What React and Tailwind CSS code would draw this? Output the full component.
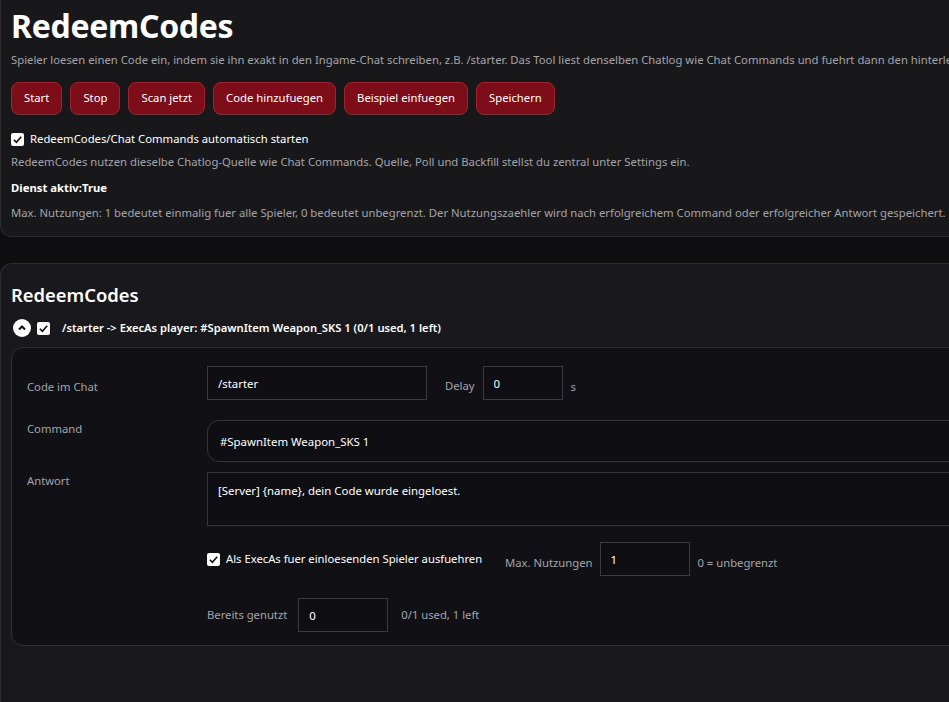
import React, { useState } from "react";

const font = { fontFamily: '"Noto Sans", "Open Sans", sans-serif' };

const Check = ({ checked, onChange }) => (
  <button
    type="button"
    onClick={onChange}
    className="w-[13px] h-[13px] bg-white rounded-[2px] flex items-center justify-center shrink-0"
  >
    {checked && (
      <svg width="11" height="11" viewBox="0 0 12 12">
        <path d="M2 6.3 L4.8 9 L10 3" fill="none" stroke="#111" strokeWidth="1.8" />
      </svg>
    )}
  </button>
);

const buttons = ["Start", "Stop", "Scan jetzt", "Code hinzufuegen", "Beispiel einfuegen", "Speichern"];

const inputCls =
  "h-[34px] bg-[#0f0f13] border border-[#3a3a40] px-[10px] text-white text-[11.4px] outline-none";

const App = () => {
  const [autoStart, setAutoStart] = useState(true);
  const [enabled, setEnabled] = useState(true);
  const [execAs, setExecAs] = useState(true);
  const [open, setOpen] = useState(true);

  const [code, setCode] = useState({
    chat: "/starter",
    delay: "0",
    command: "#SpawnItem Weapon_SKS 1",
    answer: "[Server] {name}, dein Code wurde eingeloest.",
    max: "1",
    used: "0",
  });

  const handleChange = (e) => {
    setCode({ ...code, [e.target.name]: e.target.value });
  };

  return (
    <div style={font} className="w-[949px] h-[702px] overflow-hidden bg-[#0e0e11] text-white">
      <div className="w-[1300px]">
        {/* top card */}
        <div className="bg-[#18181b] border-b border-l border-[#2c2c31] rounded-bl-xl px-[10px] pt-[4px] pb-[15px]">
          <h1 className="text-[32px] font-bold leading-[44px] tracking-[-0.3px]">RedeemCodes</h1>
          <p className="text-[11.3px] leading-[16px] text-[#a3a3aa] mt-[4px] whitespace-nowrap">
            Spieler loesen einen Code ein, indem sie ihn exakt in den Ingame-Chat schreiben, z.B. /starter. Das Tool liest denselben Chatlog wie Chat Commands und fuehrt dann den hinterlegten Command aus.
          </p>
          <div className="flex gap-[8px] mt-[14px]">
            {buttons.map((b) => (
              <button
                key={b}
                className="h-[33px] px-[12px] rounded-lg bg-[#7d0d18] border border-[#a1232e] text-[11.3px] text-white hover:bg-[#8f1420]"
              >
                {b}
              </button>
            ))}
          </div>
          <label className="flex items-center gap-[6px] mt-[16px] text-[11.3px] leading-[16px]">
            <Check checked={autoStart} onChange={() => setAutoStart(!autoStart)} />
            RedeemCodes/Chat Commands automatisch starten
          </label>
          <p className="text-[11.3px] leading-[16px] text-[#a3a3aa] mt-[7px] whitespace-nowrap">
            RedeemCodes nutzen dieselbe Chatlog-Quelle wie Chat Commands. Quelle, Poll und Backfill stellst du zentral unter Settings ein.
          </p>
          <p className="text-[11.3px] leading-[16px] font-bold mt-[10px]">Dienst aktiv:True</p>
          <p className="text-[11.3px] leading-[16px] text-[#a3a3aa] mt-[9px] whitespace-nowrap">
            Max. Nutzungen: 1 bedeutet einmalig fuer alle Spieler, 0 bedeutet unbegrenzt. Der Nutzungszaehler wird nach erfolgreichem Command oder erfolgreicher Antwort gespeichert. Pro Spieler wird nicht unterschieden.
          </p>
        </div>

        {/* list card */}
        <div className="mt-[26px] bg-[#19191d] border-t border-l border-[#2c2c31] rounded-tl-xl pl-[10px] pt-[18px] h-[500px]">
          <h2 className="text-[18.4px] font-semibold leading-[26px]">RedeemCodes</h2>
          <div className="flex items-center mt-[10px] h-[20px]">
            <button
              onClick={() => setOpen(!open)}
              className="w-[18px] h-[18px] ml-[2px] rounded-full bg-white flex items-center justify-center"
            >
              <svg width="10" height="10" viewBox="0 0 10 10">
                <path d={open ? "M2 6.5 L5 3.5 L8 6.5" : "M2 3.5 L5 6.5 L8 3.5"} fill="none" stroke="#111" strokeWidth="2" />
              </svg>
            </button>
            <span className="ml-[6px]">
              <Check checked={enabled} onChange={() => setEnabled(!enabled)} />
            </span>
            <span className="ml-[12px] text-[11.2px] font-semibold">
              /starter -&gt; ExecAs player: #SpawnItem Weapon_SKS 1 (0/1 used, 1 left)
            </span>
          </div>

          {open && (
            <div className="mt-[9px] bg-[#111115] border border-[#2f2f35] rounded-xl pl-[15px] pt-[18px] pb-[13px] text-[11.25px] leading-[16px]">
              <div className="flex">
                <div className="w-[180px] shrink-0 text-[#a3a3aa] pt-[13px]">Code im Chat</div>
                <div className="flex items-center">
                  <input name="chat" value={code.chat} onChange={handleChange} className={`${inputCls} w-[220px]`} />
                  <span className="ml-[18px] text-[#a3a3aa] pt-[5px]">Delay</span>
                  <input name="delay" value={code.delay} onChange={handleChange} className={`${inputCls} ml-[8px] w-[80px]`} />
                  <span className="ml-[8px] text-[#a3a3aa] pt-[7px]">s</span>
                </div>
              </div>

              <div className="flex mt-[20px]">
                <div className="w-[180px] shrink-0 text-[#a3a3aa] pt-[1px]">Command</div>
                <input
                  name="command"
                  value={code.command}
                  onChange={handleChange}
                  className="flex-1 h-[42px] bg-[#0f0f13] border border-[#34343a] rounded-xl px-[12px] text-white text-[11.4px] outline-none"
                />
              </div>

              <div className="flex mt-[10px]">
                <div className="w-[180px] shrink-0 text-[#a3a3aa] pt-[1px]">Antwort</div>
                <textarea
                  name="answer"
                  value={code.answer}
                  onChange={handleChange}
                  className="flex-1 h-[54px] bg-[#0f0f13] border border-[#34343a] px-[10px] pt-[10px] text-white text-[11.4px] outline-none resize-none"
                />
              </div>

              <div className="flex mt-[16px] pl-[180px]">
                <div className="flex items-center">
                  <label className="flex items-center gap-[6px] text-white">
                    <Check checked={execAs} onChange={() => setExecAs(!execAs)} />
                    Als ExecAs fuer einloesenden Spieler ausfuehren
                  </label>
                  <span className="ml-[23px] text-[#a3a3aa] pt-[7px]">Max. Nutzungen</span>
                  <input name="max" value={code.max} onChange={handleChange} className={`${inputCls} ml-[7px] w-[90px]`} />
                  <span className="ml-[8px] text-[#a3a3aa] pt-[7px]">0 = unbegrenzt</span>
                </div>
              </div>

              <div className="flex mt-[22px] pl-[180px]">
                <div className="flex items-center">
                  <span className="text-[#a3a3aa]">Bereits genutzt</span>
                  <input name="used" value={code.used} onChange={handleChange} className={`${inputCls} ml-[11px] w-[90px]`} />
                  <span className="ml-[13px] text-[#a3a3aa]">0/1 used, 1 left</span>
                </div>
              </div>
            </div>
          )}
        </div>
      </div>
    </div>
  );
};

export default App;
